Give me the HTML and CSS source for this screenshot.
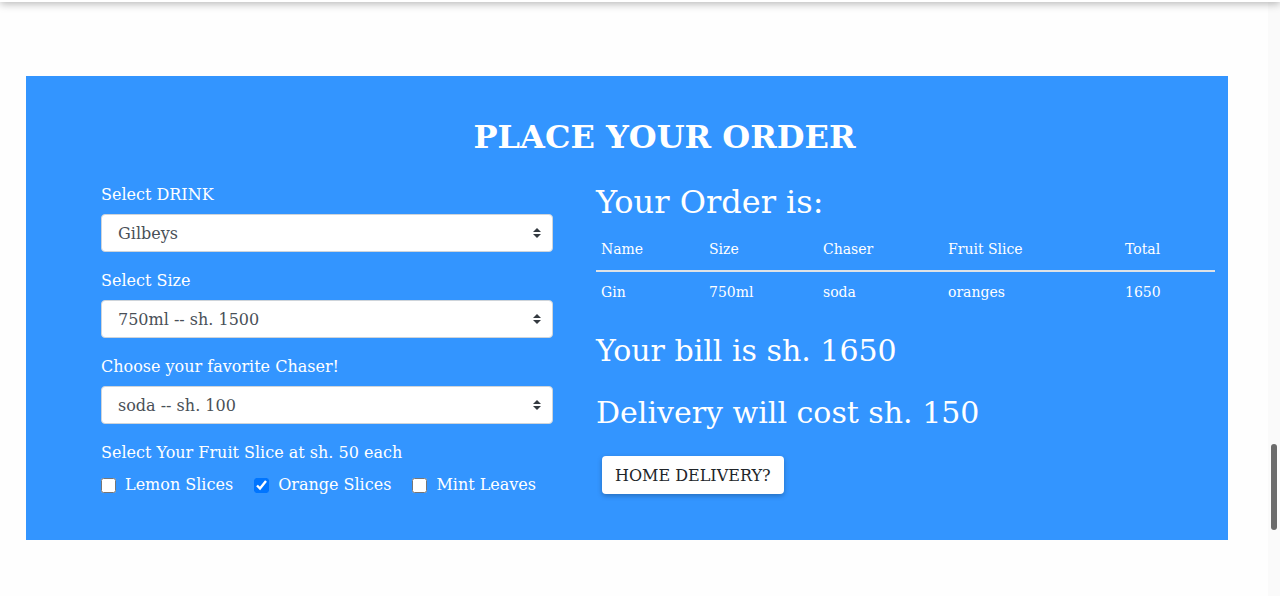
FILE: index.html
```html
<!DOCTYPE html>
<html lang="en">
<head>
<meta charset="utf-8">
<title>Place your order</title>
<link rel="stylesheet" href="styles.css">
</head>
<body>
<div class="topbar"></div>
<main class="page">
  <section class="order">
    <h2 class="order-title">PLACE YOUR ORDER</h2>
    <div class="order-grid">
      <form class="order-form">
        <div class="field">
          <label class="field-label">Select DRINK</label>
          <div class="select-wrap">
            <select class="select"><option>Gilbeys</option></select>
            <svg class="select-arrow" width="8" height="10" viewBox="0 0 8 10"><path d="M4 0 L8 4 H0 Z M0 6 H8 L4 10 Z" fill="#343a40"/></svg>
          </div>
        </div>
        <div class="field">
          <label class="field-label">Select Size</label>
          <div class="select-wrap">
            <select class="select"><option>750ml -- sh. 1500</option></select>
            <svg class="select-arrow" width="8" height="10" viewBox="0 0 8 10"><path d="M4 0 L8 4 H0 Z M0 6 H8 L4 10 Z" fill="#343a40"/></svg>
          </div>
        </div>
        <div class="field">
          <label class="field-label">Choose your favorite Chaser!</label>
          <div class="select-wrap">
            <select class="select"><option>soda -- sh. 100</option></select>
            <svg class="select-arrow" width="8" height="10" viewBox="0 0 8 10"><path d="M4 0 L8 4 H0 Z M0 6 H8 L4 10 Z" fill="#343a40"/></svg>
          </div>
        </div>
        <div class="field field-last">
          <label class="field-label">Select Your Fruit Slice at sh. 50 each</label>
          <div class="checks">
            <label class="check"><input type="checkbox" class="check-box"> Lemon Slices</label>
            <label class="check"><input type="checkbox" class="check-box" checked> Orange Slices</label>
            <label class="check"><input type="checkbox" class="check-box"> Mint Leaves</label>
          </div>
        </div>
      </form>
      <div class="summary">
        <h3 class="summary-title">Your Order is:</h3>
        <table class="summary-table">
          <thead>
            <tr><th class="c-name">Name</th><th class="c-size">Size</th><th class="c-chaser">Chaser</th><th class="c-fruit">Fruit Slice</th><th class="c-total">Total</th></tr>
          </thead>
          <tbody>
            <tr><td>Gin</td><td>750ml</td><td>soda</td><td>oranges</td><td>1650</td></tr>
          </tbody>
        </table>
        <p class="bill">Your bill is sh. 1650</p>
        <p class="bill bill-delivery">Delivery will cost sh. 150</p>
        <button type="button" class="delivery-btn">HOME DELIVERY?</button>
      </div>
    </div>
  </section>
</main>
<div class="scroll-track"><div class="scroll-thumb"></div></div>
</body>
</html>
```

FILE: styles.css
```css
html, body {
  margin: 0;
  padding: 0;
  background: #fefefe;
  font-family: "DejaVu Serif", serif;
  color: #fff;
}

.topbar {
  position: fixed;
  top: -60px;
  left: 0;
  right: 0;
  height: 62px;
  background: #fff;
  box-shadow: 0 2px 8px rgba(0, 0, 0, 0.28);
  z-index: 5;
}

.page {
  padding-top: 76px;
  height: 520px;
}

.order {
  margin-left: 26px;
  width: 1202px;
  background: #3395ff;
  padding: 42px 0 43px 75px;
  box-sizing: border-box;
}

.order-title {
  margin: 0 0 27px;
  text-align: center;
  font-size: 32px;
  line-height: 38px;
  font-weight: bold;
}

.order-grid {
  display: grid;
  grid-template-columns: 452px 1fr;
  column-gap: 43px;
}

.field {
  margin-bottom: 17px;
}

.field-last {
  margin-bottom: 0;
}

.field-label {
  display: block;
  font-size: 16px;
  line-height: 24px;
  margin-bottom: 7px;
}

.field-last .field-label {
  margin-bottom: 8px;
}

.select-wrap {
  position: relative;
}

.select {
  display: block;
  width: 100%;
  height: 38px;
  box-sizing: border-box;
  appearance: none;
  -webkit-appearance: none;
  background: #fff;
  border: 1px solid #ced4da;
  border-radius: 4px;
  padding: 0 30px 0 16px;
  font-family: "DejaVu Serif", serif;
  font-size: 16px;
  color: #495057;
}

.select-arrow {
  position: absolute;
  right: 12px;
  top: 14px;
  pointer-events: none;
}

.checks {
  display: flex;
  gap: 21px;
}

.check {
  display: flex;
  align-items: center;
  gap: 9px;
  font-size: 16px;
  line-height: 24px;
}

.check-box {
  width: 15px;
  height: 15px;
  margin: 0;
  accent-color: #0075ff;
}

.summary-title {
  margin: 0;
  font-size: 32px;
  line-height: 38px;
  font-weight: normal;
}

.summary-table {
  margin-top: 7px;
  width: 619px;
  border-collapse: collapse;
  font-size: 14px;
  line-height: 21px;
}

.summary-table th,
.summary-table td {
  text-align: left;
  font-weight: normal;
  padding: 10px 5px 9px;
}

.summary-table th {
  padding: 11px 5px 10px;
  border-bottom: 2px solid #dee2e6;
}

.c-name { width: 98px; }
.c-size { width: 104px; }
.c-chaser { width: 115px; }
.c-fruit { width: 167px; }

.bill {
  margin: 0;
  font-size: 30px;
  line-height: 40px;
}

.summary-table + .bill {
  margin-top: 19px;
}

.bill-delivery {
  margin-top: 22px;
}

.delivery-btn {
  display: block;
  margin: 23px 0 0 6px;
  height: 38px;
  padding: 0 13px;
  background: #fff;
  border: 0;
  border-radius: 4px;
  box-shadow: 0 2px 5px rgba(0, 0, 0, 0.25);
  font-family: "DejaVu Serif", serif;
  font-size: 16px;
  color: #212529;
}

.scroll-track {
  position: fixed;
  top: 0;
  right: 0;
  width: 12px;
  height: 100%;
  background: #fafafa;
}

.scroll-thumb {
  position: absolute;
  top: 444px;
  left: 3px;
  width: 6px;
  height: 86px;
  border-radius: 3px;
  background: #6b6b6b;
}
```
